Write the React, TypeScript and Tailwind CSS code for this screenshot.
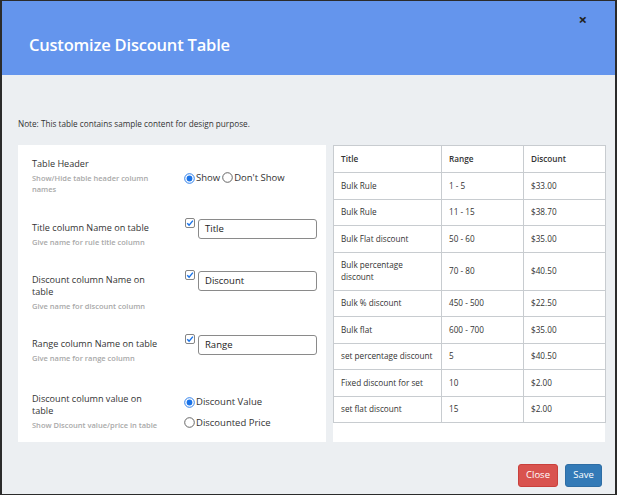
import React from "react";

const rows: [string, string, string][] = [
  ["Bulk Rule", "1 - 5", "$33.00"],
  ["Bulk Rule", "11 - 15", "$38.70"],
  ["Bulk Flat discount", "50 - 60", "$35.00"],
  ["Bulk percentage discount", "70 - 80", "$40.50"],
  ["Bulk % discount", "450 - 500", "$22.50"],
  ["Bulk flat", "600 - 700", "$35.00"],
  ["set percentage discount", "5", "$40.50"],
  ["Fixed discount for set", "10", "$2.00"],
  ["set flat discount", "15", "$2.00"],
];

function Radio({ checked }: { checked?: boolean }) {
  return (
    <svg width="11" height="11" viewBox="0 0 11 11" className="shrink-0">
      <circle cx="5.5" cy="5.5" r="4.8" fill="white" stroke={checked ? "#1a73e8" : "#555"} strokeWidth="0.9" />
      {checked && <circle cx="5.5" cy="5.5" r="2.9" fill="#1a73e8" />}
    </svg>
  );
}

function Check() {
  return (
    <svg width="10" height="10" viewBox="0 0 10 10" className="shrink-0">
      <rect x="0.5" y="0.5" width="9" height="9" rx="1.5" fill="white" stroke="#777" strokeWidth="0.9" />
      <path d="M2.2 5.2 L4.1 7.1 L7.9 2.6" fill="none" stroke="#1a73e8" strokeWidth="1.4" />
    </svg>
  );
}

function TextBox({ value }: { value: string }) {
  return (
    <div className="flex items-start gap-[3px] -mt-[3px]">
      <div className="mt-[-1px]">
        <Check />
      </div>
      <div className="w-[119px] h-[20px] border border-[#8a8a8a] rounded-[3px] bg-white flex items-center pl-[6px] text-[9.5px] text-[#222]">
        {value}
      </div>
    </div>
  );
}

function Label({ title, sub }: { title: React.ReactNode; sub: string }) {
  return (
    <div className="w-[153px] shrink-0 pr-[20px]">
      <div className="text-[9.1px] leading-[12px] text-[#333]">{title}</div>
      <div className="text-[7.5px] leading-[11px] mt-[3px] text-[#a9a9a9] font-semibold">{sub}</div>
    </div>
  );
}

export default function App() {
  return (
    <div
      className="w-[617px] h-[495px] bg-[#2b2b2b] pt-[1px] pl-[2px] overflow-hidden"
      style={{ fontFamily: '"Open Sans", "Noto Sans", sans-serif' }}
    >
      <div className="w-[613px] h-[493px] bg-[#eceff2] flex flex-col">
        <div className="h-[74px] bg-[#6495ed] relative shrink-0 pl-[27px] pt-[35px]">
          <div className="text-white text-[16.5px] font-semibold tracking-[-0.2px] leading-[18px]">
            Customize Discount Table
          </div>
          <div className="absolute right-[28px] top-[11px] text-[#222] text-[15px] font-bold leading-none">×</div>
        </div>

        <div className="pl-[16px] pr-[10px] pt-[50px]">
          <div className="text-[8.2px] leading-[10px] text-[#333] -mt-[6px] mb-[16px]">
            Note: This table contains sample content for design purpose.
          </div>
          <div className="flex gap-[7px]">
            <div className="w-[308px] h-[297px] bg-white pl-[14px] pt-[13px] flex flex-col">
              <div className="flex items-center">
                <Label title="Table Header" sub="Show/Hide table header column names" />
                <div className="flex items-center text-[9.5px] text-[#333] -ml-[1px] mt-[4px]">
                  <Radio checked />
                  <span className="ml-[1px]">Show</span>
                  <span className="ml-[2px] -mt-[2px]"><Radio /></span>
                  <span className="ml-[1px]">Don't Show</span>
                </div>
              </div>
              <div className="flex items-start mt-[27px]">
                <Label title="Title column Name on table" sub="Give name for rule title column" />
                <TextBox value="Title" />
              </div>
              <div className="flex items-start mt-[26px]">
                <Label title="Discount column Name on table" sub="Give name for discount column" />
                <TextBox value="Discount" />
              </div>
              <div className="flex items-start mt-[26px]">
                <Label title="Range column Name on table" sub="Give name for range column" />
                <TextBox value="Range" />
              </div>
              <div className="flex items-center mt-[29px]">
                <Label title="Discount column value on table" sub="Show Discount value/price in table" />
                <div className="flex flex-col gap-[6px] text-[9.5px] text-[#333] -ml-[1px] mt-[1px]">
                  <div className="flex items-center gap-[1px]">
                    <Radio checked />
                    <span>Discount Value</span>
                  </div>
                  <div className="flex items-center gap-[1px]">
                    <Radio />
                    <span>Discounted Price</span>
                  </div>
                </div>
              </div>
            </div>

            <div className="w-[272px] h-[297px] bg-white">
              <table className="w-[272px] border-collapse text-[8.2px] text-[#333] table-fixed">
                <colgroup>
                  <col className="w-[108px]" />
                  <col className="w-[82px]" />
                  <col className="w-[82px]" />
                </colgroup>
                <thead>
                  <tr className="h-[27px]">
                    <th className="border border-[#c8ccd0] text-left font-semibold px-[7px]">Title</th>
                    <th className="border border-[#c8ccd0] text-left font-semibold px-[7px]">Range</th>
                    <th className="border border-[#c8ccd0] text-left font-semibold px-[7px]">Discount</th>
                  </tr>
                </thead>
                <tbody>
                  {rows.map((r, i) => (
                    <tr key={i} className={i === 3 ? "h-[38px]" : "h-[26.5px]"}>
                      <td className="border border-[#c8ccd0] px-[7px] leading-[12px]">{r[0]}</td>
                      <td className="border border-[#c8ccd0] px-[7px]">{r[1]}</td>
                      <td className="border border-[#c8ccd0] px-[7px]">{r[2]}</td>
                    </tr>
                  ))}
                </tbody>
              </table>
            </div>
          </div>
          <div className="flex justify-end gap-[7px] mt-[22px] pr-[3px]">
            <div className="w-[40px] h-[23px] bg-[#d9534f] rounded-[3px] text-white text-[9.5px] flex items-center justify-center border border-[#c9403c]">
              Close
            </div>
            <div className="w-[37px] h-[23px] bg-[#337ab7] rounded-[3px] text-white text-[9.5px] flex items-center justify-center border border-[#2e6da4]">
              Save
            </div>
          </div>
        </div>
      </div>
    </div>
  );
}
